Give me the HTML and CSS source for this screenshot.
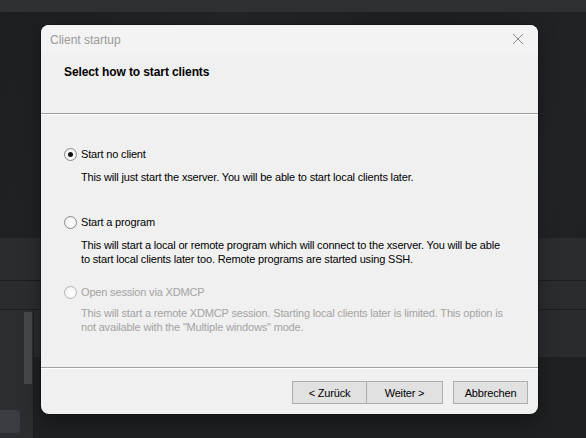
FILE: index.html
```html
<!DOCTYPE html>
<html>
<head>
<meta charset="utf-8">
<link rel="stylesheet" href="styles.css">
</head>
<body>
<div class="desktop">
  <div class="topbar"></div>
  <div class="gap"></div>
  <div class="band">
    <div class="band-row r1"></div>
    <div class="band-row r2"></div>
    <div class="lower">
      <div class="side">
        <div class="thumb"></div>
        <div class="sidebtn"></div>
      </div>
      <div class="main">
        <div class="r3"></div>
        <div class="dark"></div>
      </div>
    </div>
  </div>
</div>

<div class="dialog">
  <div class="titlebar">
    <span class="title">Client startup</span>
    <svg class="close" width="12" height="12" viewBox="0 0 12 12"><path d="M1 1 L11 11 M11 1 L1 11" stroke="#8a8a8a" stroke-width="1" fill="none"/></svg>
  </div>
  <div class="header">
    <div class="heading">Select how to start clients</div>
  </div>
  <div class="sep"></div>
  <div class="body">
    <div class="option o1">
      <div class="row"><span class="radio checked"></span><span class="label">Start no client</span></div>
      <div class="desc">This will just start the xserver. You will be able to start local clients later.</div>
    </div>
    <div class="option o2">
      <div class="row"><span class="radio"></span><span class="label">Start a program</span></div>
      <div class="desc">This will start a local or remote program which will connect to the xserver. You will be able<br>to start local clients later too. Remote programs are started using SSH.</div>
    </div>
    <div class="option o3 disabled">
      <div class="row"><span class="radio"></span><span class="label">Open session via XDMCP</span></div>
      <div class="desc">This will start a remote XDMCP session. Starting local clients later is limited. This option is<br>not available with the "Multiple windows" mode.</div>
    </div>
  </div>
  <div class="sep"></div>
  <div class="footer">
    <button class="btn">&lt; Zurück</button><button class="btn">Weiter &gt;</button><button class="btn cancel">Abbrechen</button>
  </div>
</div>
</body>
</html>
```

FILE: styles.css
```css
html, body {
  margin: 0;
  padding: 0;
}
body {
  width: 586px;
  height: 438px;
  overflow: hidden;
  position: relative;
  background: #1f2023;
  font-family: "Liberation Sans", Arial, sans-serif;
}
.desktop {
  display: flex;
  flex-direction: column;
  height: 438px;
  background: linear-gradient(115deg, #1d1e21 0%, #232428 30%, #1e1f22 55%, #222327 80%, #1e1f22 100%);
}
.topbar {
  height: 12px;
  background: #2f3034;
}
.gap {
  height: 226px;
}
.band {
  flex: 1;
  display: flex;
  flex-direction: column;
}
.band-row {
  background: #2b2c30;
  border-bottom: 1px solid #1c1d20;
}
.r1 { height: 42px; }
.r2 { height: 28px; }
.lower {
  flex: 1;
  display: flex;
}
.side {
  width: 33px;
  background: #2b2d31;
  border-right: 1px solid #1b1c1f;
  position: relative;
}
.thumb {
  position: absolute;
  left: 24px;
  top: 2px;
  width: 8px;
  height: 72px;
  background: #45474b;
}
.sidebtn {
  position: absolute;
  left: -4px;
  top: 100px;
  width: 24px;
  height: 23px;
  border-radius: 4px;
  background: #3a3c41;
}
.main {
  flex: 1;
  display: flex;
  flex-direction: column;
}
.r3 {
  height: 47px;
  background: #2a2b2f;
}
.dark {
  flex: 1;
  background: #1f2023;
}

.dialog {
  position: absolute;
  left: 41px;
  top: 25px;
  width: 497px;
  height: 389px;
  border-radius: 8px;
  background: #f0f0f0;
  display: flex;
  flex-direction: column;
  overflow: hidden;
  box-shadow: 0 0 0 1px rgba(0,0,0,0.25), 0 6px 18px rgba(0,0,0,0.35);
}
.titlebar {
  height: 30px;
  background: #f3f3f3;
  display: flex;
  align-items: center;
  justify-content: space-between;
  padding: 0 14px 0 9px;
}
.title {
  font-size: 12px;
  color: #9a9a9a;
}
.close {
  display: block;
  margin-top: -2px;
}
.header {
  height: 58px;
  box-sizing: border-box;
  padding: 10px 0 0 23px;
  background: #f0f0f0;
}
.heading {
  font-size: 12px;
  line-height: 14px;
  font-weight: bold;
  color: #000;
  letter-spacing: -0.1px;
}
.sep {
  height: 0;
  border-top: 1px solid #a0a0a0;
  border-bottom: 1px solid #ffffff;
}
.body {
  height: 252px;
  box-sizing: border-box;
  padding: 32px 0 0 23px;
  font-size: 11px;
  line-height: 14px;
  color: #000;
  letter-spacing: -0.17px;
}
.row {
  display: flex;
  align-items: center;
  height: 14px;
  gap: 4px;
}
.radio {
  width: 11px;
  height: 11px;
  border-radius: 50%;
  border: 1px solid #8a8a8a;
  background: radial-gradient(circle at 60% 60%, #ffffff 0%, #f4f4f4 60%, #dcdcdc 100%);
  position: relative;
  flex: none;
}
.radio.checked::after {
  content: "";
  position: absolute;
  left: 3px;
  top: 3px;
  width: 5px;
  height: 5px;
  border-radius: 50%;
  background: #111;
}
.desc {
  padding-left: 17px;
  margin-top: 9px;
}
.o2 { margin-top: 31px; }
.o2 .desc { margin-top: 9px; }
.o3 { margin-top: 19px; }
.o3 .desc { margin-top: 7px; }
.disabled {
  color: #a3a3a3;
}
.disabled .radio {
  border-color: #b4b4b4;
  background: radial-gradient(circle at 60% 60%, #ffffff 0%, #f6f6f6 60%, #e2e2e2 100%);
}
.footer {
  flex: 1;
  display: flex;
  justify-content: flex-end;
  align-items: flex-start;
  padding: 12px 10px 0 0;
}
.btn {
  font-family: "Liberation Sans", Arial, sans-serif;
  font-size: 11px;
  letter-spacing: -0.17px;
  color: #000;
  width: 75px;
  height: 23px;
  box-sizing: border-box;
  background: #e1e1e1;
  border: 1px solid #adadad;
  margin: 0;
  padding: 0;
}
.btn + .btn {
  margin-left: -1px;
  width: 77px;
}
.btn.cancel {
  margin-left: 10px;
  width: 75px;
}
```
